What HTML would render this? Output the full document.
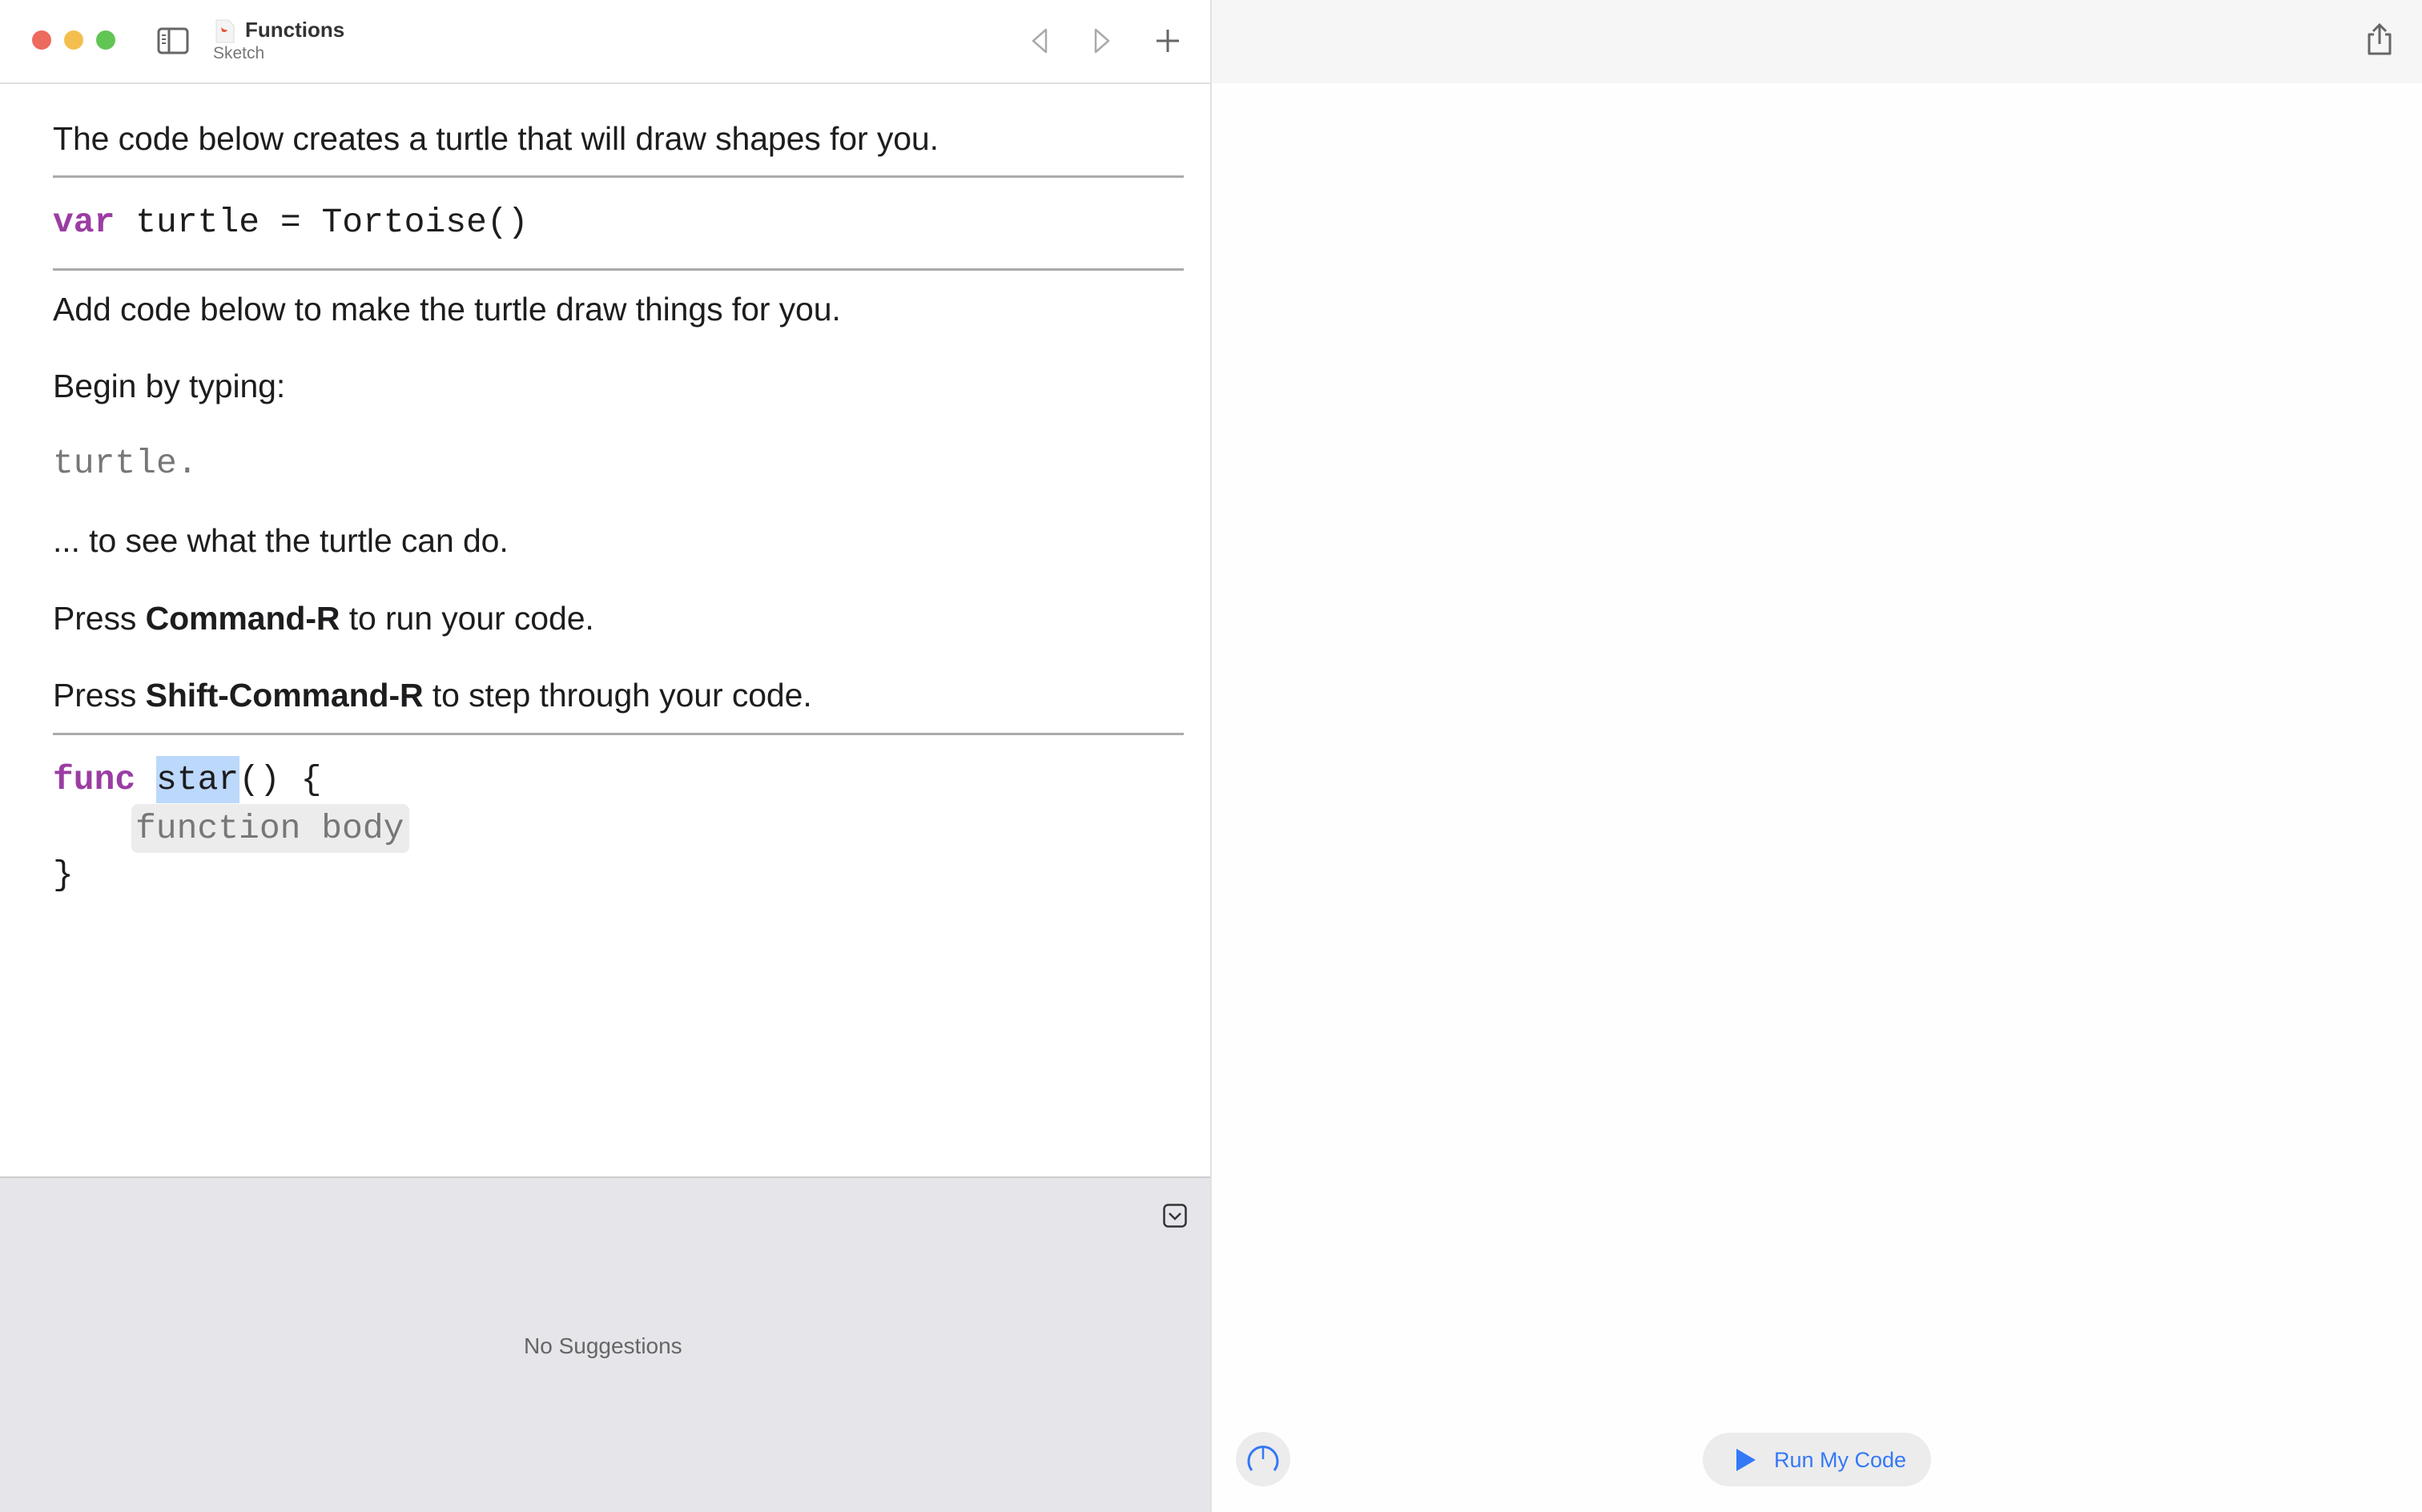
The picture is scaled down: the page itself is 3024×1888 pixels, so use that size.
<!DOCTYPE html>
<html><head><meta charset="utf-8"><style>
*{margin:0;padding:0;box-sizing:border-box}
body{width:3024px;height:1888px;position:relative;overflow:hidden;background:#fefefe;font-family:"Liberation Sans",sans-serif;color:#1d1d1f}
.a{position:absolute;white-space:nowrap}
.t{font-size:41px;left:66px;line-height:50px;letter-spacing:-0.1px}
.m{font-family:"Liberation Mono",monospace;font-size:43px;line-height:60px;left:66px}
.hr{position:absolute;left:66px;width:1412px;height:3px;background:#aaa}
.kw{color:#9b3da3;font-weight:bold}
</style></head><body>
<div class="a" style="left:0;top:0;width:1512px;height:1888px;background:#fff"></div>
<div class="a" style="left:1512px;top:0;width:1512px;height:104px;background:#f6f6f6"></div>
<div class="a" style="left:1511px;top:0;width:2px;height:1888px;background:#e2e2e2"></div>
<div class="a" style="left:0;top:103px;width:1512px;height:2px;background:#e0e0e0"></div>
<div class="a" style="left:40px;top:38px;width:24px;height:24px;border-radius:50%;background:#ec6a5e"></div>
<div class="a" style="left:80px;top:38px;width:24px;height:24px;border-radius:50%;background:#f4bf4f"></div>
<div class="a" style="left:120px;top:38px;width:24px;height:24px;border-radius:50%;background:#61c554"></div>
<svg class="a" style="left:196px;top:34px" width="40" height="34" viewBox="0 0 40 34"><rect x="2" y="2" width="36" height="30" rx="4" fill="none" stroke="#666" stroke-width="3"/><line x1="15" y1="2" x2="15" y2="32" stroke="#666" stroke-width="3"/><line x1="6" y1="10" x2="11" y2="10" stroke="#666" stroke-width="2"/><line x1="6" y1="15" x2="11" y2="15" stroke="#666" stroke-width="2"/><line x1="6" y1="20" x2="11" y2="20" stroke="#666" stroke-width="2"/></svg>
<svg class="a" style="left:268px;top:24px" width="26" height="30" viewBox="0 0 26 30"><path d="M2 1h15l7 7v21H2z" fill="#f4f4f4" stroke="#ddd"/><path d="M8 10c3 3 6 4 8 3-1 3-4 4-7 2z" fill="#e8522f"/></svg>
<div class="a" style="left:306px;top:22px;font-size:26px;font-weight:bold;color:#333">Functions</div>
<div class="a" style="left:266px;top:55px;font-size:21px;color:#777">Sketch</div>
<svg class="a" style="left:1284px;top:34px" width="200" height="34" viewBox="0 0 200 34"><path d="M22 3 L6 17 L22 31 Z" fill="none" stroke="#aaa" stroke-width="2.5" stroke-linejoin="round"/><path d="M84 3 L100 17 L84 31 Z" fill="none" stroke="#aaa" stroke-width="2.5" stroke-linejoin="round"/><path d="M174 3V31M160 17H188" stroke="#666" stroke-width="3"/></svg>
<svg class="a" style="left:2954px;top:29px" width="34" height="40" viewBox="0 0 34 40"><path d="M10 14H4V38H30V14H24" fill="none" stroke="#666" stroke-width="3" stroke-linejoin="round"/><path d="M17 26V3M9 10L17 2L25 10" fill="none" stroke="#666" stroke-width="3"/></svg>
<div class="a t" style="top:148px">The code below creates a turtle that will draw shapes for you.</div>
<div class="hr" style="top:219px"></div>
<div class="a m" style="top:248px"><span class="kw">var</span> turtle = Tortoise()</div>
<div class="hr" style="top:335px"></div>
<div class="a t" style="top:361px">Add code below to make the turtle draw things for you.</div>
<div class="a t" style="top:457px">Begin by typing:</div>
<div class="a m" style="top:549px;color:#777">turtle.</div>
<div class="a t" style="top:650px">... to see what the turtle can do.</div>
<div class="a t" style="top:747px">Press <b>Command-R</b> to run your code.</div>
<div class="a t" style="top:843px">Press <b>Shift-Command-R</b> to step through your code.</div>
<div class="hr" style="top:915px"></div>
<div class="a" style="left:195px;top:944px;width:104px;height:59px;background:#bcd8fb"></div>
<div class="a" style="left:164px;top:1004px;width:347px;height:61px;background:#ececec;border-radius:8px"></div>
<div class="a m" style="top:944px"><span class="kw">func</span> star() {</div>
<div class="a m" style="top:1005px;left:169px;color:#777">function body</div>
<div class="a m" style="top:1063px">}</div>
<div class="a" style="left:0;top:1469px;width:1511px;height:419px;background:#e5e5ea;border-top:2px solid #ccc"></div>
<svg class="a" style="left:1452px;top:1503px" width="30" height="30" viewBox="0 0 30 30"><rect x="1.5" y="1.5" width="27" height="27" rx="5" fill="none" stroke="#333" stroke-width="2.5"/><path d="M8 12L15 19L22 12" fill="none" stroke="#333" stroke-width="2.5"/></svg>
<div class="a" style="left:654px;top:1665px;font-size:28px;color:#666">No Suggestions</div>
<div class="a" style="left:1543px;top:1788px;width:68px;height:68px;border-radius:50%;background:#ececec"></div>
<svg class="a" style="left:1555px;top:1800px" width="44" height="44" viewBox="0 0 44 44"><path d="M8 36A18 18 0 1 1 36 36" fill="none" stroke="#3478f6" stroke-width="3"/><line x1="22" y1="8" x2="22" y2="22" stroke="#3478f6" stroke-width="2.5"/></svg>
<div class="a" style="left:2126px;top:1789px;width:285px;height:67px;border-radius:34px;background:#ececec"></div>
<svg class="a" style="left:2166px;top:1808px" width="28" height="30" viewBox="0 0 28 30"><path d="M2 1L26 15L2 29Z" fill="#3478f6"/></svg>
<div class="a" style="left:2215px;top:1808px;font-size:27px;color:#3478f6">Run My Code</div>
</body></html>
